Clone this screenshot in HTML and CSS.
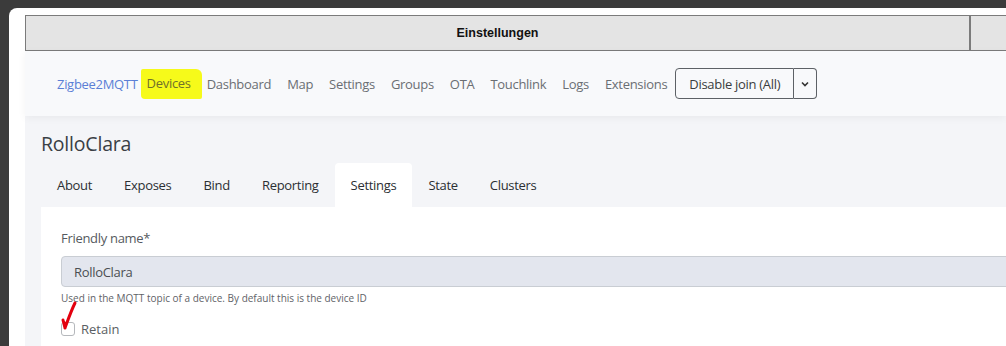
FILE: index.html
```html
<!DOCTYPE html>
<html lang="de">
<head>
    <meta charset="UTF-8">
    <title>Einstellungen</title>
    <link rel="stylesheet" href="styles.css">
</head>
<body>
    <div class="window">
        <div class="titlebar">
            <div class="titlebar-main">Einstellungen</div>
            <div class="titlebar-side"></div>
        </div>

        <div class="app">
            <nav class="navbar">
                <a class="brand">Zigbee2MQTT</a>
                <a class="nav-link marked">Devices</a>
                <a class="nav-link">Dashboard</a>
                <a class="nav-link">Map</a>
                <a class="nav-link">Settings</a>
                <a class="nav-link">Groups</a>
                <a class="nav-link">OTA</a>
                <a class="nav-link">Touchlink</a>
                <a class="nav-link">Logs</a>
                <a class="nav-link">Extensions</a>
                <div class="btn-group">
                    <button class="btn">Disable join (All)</button>
                    <button class="btn btn-toggle">
                        <svg width="8" height="6" viewBox="0 0 8 6"><path d="M1 1.5 L4 4.5 L7 1.5" fill="none" stroke="#333" stroke-width="1.6"/></svg>
                    </button>
                </div>
            </nav>

            <main class="content">
                <h2 class="device-name">RolloClara</h2>
                <ul class="tabs">
                    <li>About</li>
                    <li>Exposes</li>
                    <li>Bind</li>
                    <li>Reporting</li>
                    <li class="active">Settings</li>
                    <li>State</li>
                    <li>Clusters</li>
                </ul>
                <div class="card">
                    <label class="field-label">Friendly name*</label>
                    <input class="field-input" type="text" value="RolloClara" disabled>
                    <div class="field-help">Used in the MQTT topic of a device. By default this is the device ID</div>
                    <div class="check-row">
                        <span class="checkbox"></span>
                        <span>Retain</span>
                        <!-- handgemalter Haken im Screenshot -->
                        <svg class="scribble" width="20" height="34" viewBox="0 0 20 34">
                            <path d="M3 21 L5 29 M5 29 C8 21 11 12 15 4" fill="none" stroke="#e3000f" stroke-width="3" stroke-linecap="round"/>
                            <path d="M2.5 21 L5 30 L7.5 24 Z" fill="#e3000f"/>
                        </svg>
                    </div>
                </div>
            </main>
        </div>
    </div>
</body>
</html>
```

FILE: styles.css
```css
body {
    margin: 0;
    background-color: #3b3b3b;
    padding: 8px 0 0 9px;
    height: 346px;
    box-sizing: border-box;
    overflow: hidden;
    font-family: "Open Sans", "Noto Sans", sans-serif;
}

.window {
    background: #fff;
    border-top-left-radius: 8px;
    padding: 7px 0 0 16px;
    height: 100%;
    box-sizing: border-box;
    overflow: hidden;
}

.titlebar {
    display: flex;
    height: 34px;
    background: #e4e4e4;
    border: 1px solid #7b7b7b;
    border-right: none;
    font-family: "Liberation Sans", Arial, sans-serif;
    font-size: 12.5px;
    font-weight: bold;
    color: #111;
}

.titlebar-main {
    width: 943px;
    border-right: 2px solid #7b7b7b;
    display: flex;
    align-items: center;
    justify-content: center;
}

.titlebar-side {
    flex: 1;
}

.app {
    background: #f4f5f8;
    height: 100%;
}

.navbar {
    display: flex;
    align-items: center;
    height: 65px;
    padding-left: 32px;
    background: #f8f9fb;
    box-shadow: 0 2px 8px rgba(0, 0, 0, 0.05);
    font-size: 13px;
    letter-spacing: -0.3px;
}

.brand {
    color: #5b7fd6;
    margin-right: 3px;
}

.nav-link {
    color: #6a6e73;
    padding: 0 8px;
}

.marked {
    background: #f6fa1a;
    padding: 5px 11px 7px 6px;
    margin-right: -3px;
    border-radius: 2px 6px 2px 4px;
    color: #70702a;
}

.btn-group {
    display: flex;
}

.btn {
    font-family: inherit;
    font-size: 13px;
    letter-spacing: -0.3px;
    color: #3a3d40;
    background: transparent;
    border: 1px solid #5d6166;
    border-radius: 4px 0 0 4px;
    height: 31px;
    padding: 0 13px;
}

.btn-toggle {
    border-left: none;
    border-radius: 0 4px 4px 0;
    width: 23px;
    padding: 0;
    display: flex;
    align-items: center;
    justify-content: center;
}

.content {
    padding: 0 0 0 16px;
}

.device-name {
    margin: 0;
    padding: 17px 0 9px;
    font-size: 19.5px;
    font-weight: 500;
    letter-spacing: -0.2px;
    color: #3a3f45;
    line-height: 21px;
}

.tabs {
    list-style: none;
    margin: 0;
    padding: 0;
    display: flex;
    height: 44px;
    letter-spacing: -0.3px;
}

.tabs li {
    padding: 0 16px;
    font-size: 13px;
    color: #2b2f33;
    display: flex;
    align-items: center;
}

.tabs li.active {
    background: #fff;
    border-radius: 4px 4px 0 0;
}

.card {
    background: #fff;
    padding: 22px 0 0 20px;
    height: 200px;
}

.field-label {
    display: block;
    font-size: 13px;
    letter-spacing: -0.3px;
    color: #555a60;
    margin-bottom: 9px;
}

.field-input {
    display: block;
    width: 1000px;
    height: 31px;
    box-sizing: border-box;
    background: #e3e6ee;
    border: 1px solid #c9cdd3;
    border-radius: 4px;
    padding: 0 12px;
    font-family: inherit;
    font-size: 13px;
    letter-spacing: -0.3px;
    color: #4a4e52;
}

.field-help {
    font-size: 10px;
    color: #5f6368;
    margin-top: 4px;
}

.check-row {
    position: relative;
    display: flex;
    align-items: center;
    gap: 6px;
    margin-top: 15px;
    font-size: 13px;
    color: #5a5e63;
}

.checkbox {
    width: 12px;
    height: 12px;
    border: 1px solid #b5b8bc;
    border-radius: 3px;
    background: #fff;
}

.scribble {
    position: absolute;
    left: -1px;
    top: -21px;
}
```
